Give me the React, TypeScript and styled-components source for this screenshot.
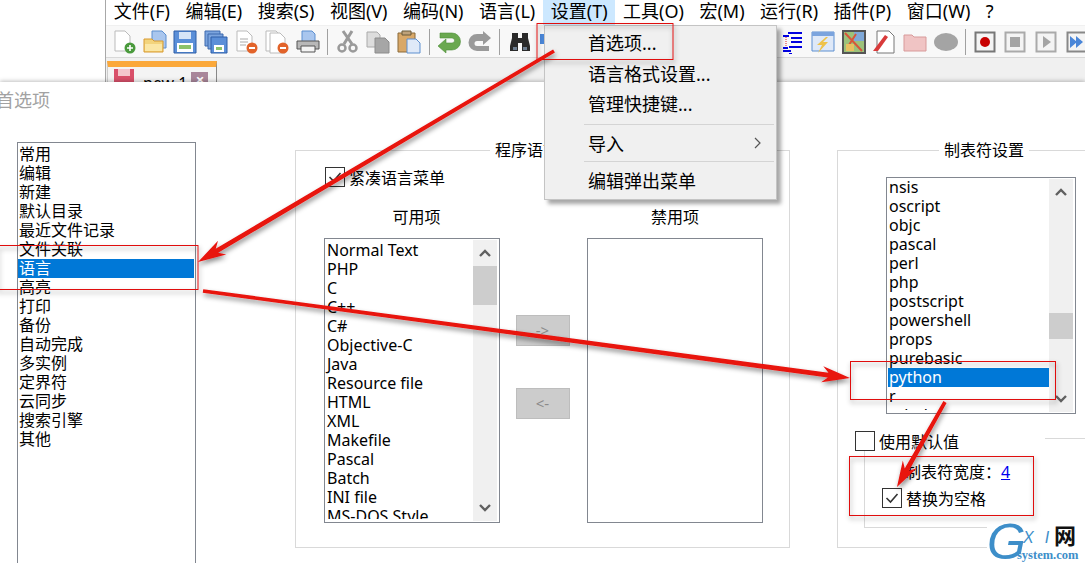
import React from 'react';
import styled, { createGlobalStyle } from 'styled-components';

const MENUS = ['文件(F)', '编辑(E)', '搜索(S)', '视图(V)', '编码(N)', '语言(L)', '设置(T)', '工具(O)', '宏(M)', '运行(R)', '插件(P)', '窗口(W)', '?'];
const CATEGORIES = ['常用', '编辑', '新建', '默认目录', '最近文件记录', '文件关联', '语言', '高亮', '打印', '备份', '自动完成', '多实例', '定界符', '云同步', '搜索引擎', '其他'];
const AVAILABLE = ['Normal Text', 'PHP', 'C', 'C++', 'C#', 'Objective-C', 'Java', 'Resource file', 'HTML', 'XML', 'Makefile', 'Pascal', 'Batch', 'INI file', 'MS-DOS Style'];
const TAB_LANGS = ['nsis', 'oscript', 'objc', 'pascal', 'perl', 'php', 'postscript', 'powershell', 'props', 'purebasic', 'python', 'r', 'rebol'];

const FONT = '"Noto Sans", "Noto Sans CJK SC", sans-serif';

const GlobalStyle = createGlobalStyle`
  html, body {
    margin: 0;
    padding: 0;
    background: #fff;
    overflow: hidden;
  }
`;

const Page = styled.div`
  position: relative;
  width: 1085px;
  height: 563px;
  overflow: hidden;
  background: #fff;
  color: #000;
  font-family: ${FONT};
  font-size: 16px;
`;

const Editor = styled.div`
  margin-left: 105px;
  height: 82px;
  border-left: 1px solid #a8a8a8;
  overflow: hidden;
`;

const MenuBar = styled.div`
  display: flex;
  height: 25px;
  background: #fff;
`;

const MenuItem = styled.div<{ $active?: boolean }>`
  padding: 0 7.75px;
  height: 25px;
  line-height: 22px;
  font-size: 18px;
  white-space: nowrap;
  background: ${(p) => (p.$active ? '#cce8ff' : 'transparent')};
`;

const Toolbar = styled.div`
  display: flex;
  align-items: center;
  height: 33px;
  padding-left: 6px;
  gap: 6.6px;
  background: #f8f8f8;
  border-top: 1px solid #f0f0f0;
  border-bottom: 1px solid #d8d8d8;
  box-sizing: border-box;
`;

const ToolIcon = styled.svg`
  flex: none;
  width: 24px;
  height: 24px;
`;

const ToolSep = styled.div`
  flex: none;
  width: 1px;
  height: 26px;
  background: #a0a0a0;
  margin: 0 1px;
`;

const ToolGap = styled.div`
  flex: none;
  width: 205px;
`;

const TabBar = styled.div`
  height: 24px;
  padding: 3px 0 0 1px;
  box-sizing: border-box;
  background: #f0f0f0;
`;

const Tab = styled.div`
  display: flex;
  align-items: flex-start;
  gap: 9px;
  width: 110px;
  height: 30px;
  padding: 2px 0 0 6px;
  box-sizing: border-box;
  border-top: 6px solid #fba83a;
  border-right: 1px solid #888;
  border-left: 1px solid #ccc;
  background: #f4f4f4;
  font-size: 16px;
  line-height: 18px;
`;

const TabIcon = styled.svg`
  flex: none;
  width: 20px;
  height: 20px;
`;

const TabName = styled.span`
  margin-top: 5px;
`;

const TabClose = styled.div`
  width: 17px;
  height: 17px;
  margin: 3px 0 0 -5px;
  background: #a9869a;
  color: #fff;
  font-size: 15px;
  line-height: 15px;
  text-align: center;
  font-weight: 700;
`;

const Dialog = styled.div`
  position: relative;
  height: 481px;
  background: #fff;
  box-shadow: 0 -1px 4px rgba(0, 0, 0, 0.25);
`;

const DialogTitle = styled.div`
  height: 36px;
  margin-left: -4px;
  font-size: 18px;
  line-height: 36px;
  color: #a2a2a2;
`;

const DialogBody = styled.div`
  display: flex;
  align-items: flex-start;
  padding-left: 17px;
`;

const CategoryList = styled.div`
  flex: none;
  width: 179px;
  height: 440px;
  margin-top: 24px;
  padding: 2px 1px 0 0;
  box-sizing: border-box;
  border: 1px solid #828790;
`;

const Row = styled.div<{ $selected?: boolean }>`
  height: 19px;
  padding-left: 1px;
  line-height: 18px;
  font-size: 16px;
  white-space: nowrap;
  color: ${(p) => (p.$selected ? '#fff' : '#000')};
  background: ${(p) => (p.$selected ? '#0078d7' : 'transparent')};
`;

const Group = styled.fieldset<{ $width: number; $height: number; $left: number; $legendLeft: number }>`
  flex: none;
  box-sizing: border-box;
  width: ${(p) => p.$width}px;
  height: ${(p) => p.$height}px;
  margin: 21px 0 0 ${(p) => p.$left}px;
  padding: 0;
  border: 1px solid #d9d9d9;
  min-inline-size: 0;

  legend {
    margin-left: ${(p) => p.$legendLeft}px;
    padding: 0 5px;
    height: 22px;
    line-height: 22px;
    font-size: 16px;
  }
`;

const LanguageBody = styled.div`
  padding: 6px 0 0 28px;
`;

const CheckRow = styled.label<{ $indent?: number }>`
  display: flex;
  align-items: center;
  gap: 4px;
  height: 20px;
  margin-left: ${(p) => p.$indent ?? 0}px;
  font-size: 16px;
  white-space: nowrap;
`;

const CheckBox = styled.span`
  display: block;
  flex: none;
  width: 18px;
  height: 18px;
  border: 1px solid #333;
  background: #fff;
`;

const Columns = styled.div`
  display: grid;
  grid-template-columns: 176px 87px 176px;
  margin-top: 18px;
`;

const ColumnTitle = styled.div<{ $shift?: number }>`
  height: 33px;
  padding-left: ${(p) => p.$shift ?? 0}px;
  line-height: 24px;
  text-align: center;
  font-size: 16px;
`;

const ListBox = styled.div<{ $height: number; $width?: number }>`
  position: relative;
  display: flex;
  width: ${(p) => (p.$width ? `${p.$width}px` : 'auto')};
  height: ${(p) => p.$height}px;
  box-sizing: border-box;
  border: 1px solid #828790;
  overflow: hidden;
`;

const ListRows = styled.div<{ $top: number }>`
  flex: 1;
  min-width: 0;
  margin-bottom: 3px;
  overflow: hidden;
  padding: ${(p) => p.$top}px 0 0 1px;
`;

const ScrollBar = styled.div`
  flex: none;
  display: flex;
  flex-direction: column;
  width: 24px;
  margin: 1px 2px 1px 0;
  background: #f0f0f0;
`;

const ScrollArrow = styled.svg`
  flex: none;
  width: 24px;
  height: 26px;
`;

const ScrollTrack = styled.div<{ $thumbTop: number }>`
  flex: 1;
  padding-top: ${(p) => p.$thumbTop}px;
`;

const ScrollThumb = styled.div<{ $height: number }>`
  height: ${(p) => p.$height}px;
  background: #cdcdcd;
`;

const MoveButtons = styled.div`
  display: flex;
  flex-direction: column;
  align-items: center;
  gap: 42px;
  padding: 110px 2px 0 0;
`;

const MoveButton = styled.div`
  width: 54px;
  height: 31px;
  box-sizing: border-box;
  background: #cccccc;
  border: 1px solid #bdbdbd;
  color: #8a8a8a;
  font-size: 15px;
  line-height: 28px;
  text-align: center;
`;

const TabBody = styled.div`
  padding: 16px 0 0 48px;
`;

const TabFooter = styled.div`
  display: flex;
  margin-top: 17px;
  margin-left: -31px;
  height: 20px;
`;

const FooterRule = styled.div`
  flex: none;
  width: 40px;
  height: 1px;
  margin: 7px 0 0 86px;
  background: #d9d9d9;
`;

const InnerGroup = styled.div`
  width: 400px;
  height: 77px;
  box-sizing: border-box;
  margin-left: -22px;
  padding: 11px 0 0 17px;
  border-left: 1px solid #d9d9d9;
  border-bottom: 1px solid #d9d9d9;
`;

const WidthRow = styled.div`
  height: 26px;
  padding-left: 23px;
  line-height: 20px;
  font-size: 16px;
`;

const WidthLink = styled.span`
  color: #0000ee;
  text-decoration: underline;
`;

const PopupMenu = styled.div`
  position: absolute;
  left: 544px;
  top: 25px;
  width: 233px;
  height: 175px;
  box-sizing: border-box;
  background: #f0f0f0;
  border: 1px solid #c4c4c4;
  box-shadow: 4px 4px 4px rgba(0, 0, 0, 0.35);
  font-size: 18px;
`;

const PopupItem = styled.div<{ $height: number }>`
  display: flex;
  justify-content: space-between;
  align-items: center;
  height: ${(p) => p.$height}px;
  padding: 0 13px 0 43px;
  white-space: nowrap;
`;

const PopupSep = styled.div<{ $gap?: number }>`
  height: 1px;
  margin: ${(p) => p.$gap ?? 0}px 2px 0 39px;
  background: #d4d4d4;
`;

const Annotations = styled.svg`
  position: absolute;
  left: 0;
  top: 0;
  width: 1085px;
  height: 563px;
  pointer-events: none;
`;

const Watermark = styled.div`
  position: absolute;
  left: 987px;
  top: 515px;
  width: 98px;
  height: 48px;
  background: #fff;
  color: #3d8ec9;
`;

const MarkG = styled.span`
  position: absolute;
  left: 0;
  top: 2px;
  font-family: 'Liberation Sans', sans-serif;
  font-style: italic;
  font-size: 50px;
  line-height: 50px;
`;

const MarkXI = styled.span`
  position: absolute;
  left: 36px;
  top: 14px;
  font-family: 'Liberation Sans', sans-serif;
  font-style: italic;
  font-size: 16px;
  line-height: 18px;
  letter-spacing: 11px;
`;

const MarkNet = styled.span`
  position: absolute;
  left: 67px;
  top: 8px;
  color: #111;
  font-size: 22px;
  line-height: 24px;
  font-weight: 700;
`;

const MarkDomain = styled.div`
  position: absolute;
  left: 30px;
  top: 33px;
  font-family: 'Liberation Serif', serif;
  font-weight: 700;
  font-size: 12.5px;
  line-height: 14px;
`;

function Sheet({ x = 3, y = 1, fill = '#fff', stroke = '#bbb' }: { x?: number; y?: number; fill?: string; stroke?: string }) {
  return <path d={`M${x} ${y}h10l5 5v15h-15z`} fill={fill} stroke={stroke} />;
}

const ICONS: Record<string, React.ReactNode> = {
  new: (
    <>
      <Sheet />
      <circle cx="18" cy="18" r="5.5" fill="#4a9a3c" />
      <path d="M15 18h6M18 15v6" stroke="#fff" strokeWidth="1.6" />
    </>
  ),
  open: (
    <>
      <path d="M9 1h10l4 4v13h-14z" fill="#a9c6ee" stroke="#5c8fd0" />
      <path d="M1 9h8l2 2h9v11h-19z" fill="#f3d47c" stroke="#d89a30" />
      <path d="M2 14h17v7h-17z" fill="#fbe7a5" />
    </>
  ),
  save: (
    <>
      <path d="M1 1h22v22h-22z" fill="#5b8fd8" stroke="#2f5fa8" />
      <path d="M6 2h12v7h-12z" fill="#d6e4f7" />
      <path d="M4 13h16v9h-16z" fill="#fff" />
      <path d="M6 15h12v4h-12z" fill="#8cc26a" />
    </>
  ),
  saveAll: (
    <>
      <path d="M1 1h15v15h-15z" fill="#7ba4de" stroke="#3d69ad" />
      <path d="M4 4h15v15h-15z" fill="#7ba4de" stroke="#3d69ad" />
      <path d="M7 7h16v16h-16z" fill="#5b8fd8" stroke="#2f5fa8" />
      <path d="M10 15h10v7h-10z" fill="#fff" />
      <path d="M12 17h6v3h-6z" fill="#8cc26a" />
    </>
  ),
  close: (
    <>
      <Sheet />
      <path d="M6 9h8M6 12h8M6 15h6" stroke="#aaa" />
      <circle cx="18" cy="18" r="5.5" fill="#e2632a" />
      <path d="M15 18h6" stroke="#fff" strokeWidth="2" />
    </>
  ),
  closeAll: (
    <>
      <Sheet x={1} y={1} />
      <Sheet x={5} y={3} />
      <circle cx="18" cy="18" r="5.5" fill="#e2632a" />
      <path d="M15 18h6" stroke="#fff" strokeWidth="2" />
    </>
  ),
  print: (
    <>
      <path d="M6 1h10l3 3v8h-13z" fill="#a9c6ee" stroke="#5c8fd0" />
      <path d="M1 11h22v8h-22z" fill="#b8b8b8" stroke="#555" />
      <path d="M5 16h14v6h-14z" fill="#f4f4f4" stroke="#555" />
    </>
  ),
  cut: (
    <>
      <path d="M16 1l-8 13M7 1l9 13" stroke="#9a9a9a" strokeWidth="3" />
      <circle cx="6" cy="18" r="3.5" fill="none" stroke="#9a9a9a" strokeWidth="2.5" />
      <circle cx="17" cy="18" r="3.5" fill="none" stroke="#9a9a9a" strokeWidth="2.5" />
    </>
  ),
  copy: (
    <>
      <path d="M1 2h10l3 3v12h-13z" fill="#ddd" stroke="#aaa" />
      <path d="M9 8h10l4 4v11h-14z" fill="#a6a6a6" stroke="#8c8c8c" />
    </>
  ),
  paste: (
    <>
      <path d="M1 3h17v19h-17z" fill="#d9a868" stroke="#8a6a3a" />
      <path d="M5 1h9v4h-9z" fill="#bfa27a" stroke="#6b5a3a" />
      <path d="M10 9h9l4 4v10h-13z" fill="#dfe9f8" stroke="#5c8fd0" />
    </>
  ),
  undo: <path d="M3 3h12a8.5 8.5 0 0 1 0 17h-6v3l-8-7 8-7v4h6a2.5 2.5 0 0 0 0-5h-12z" fill="#6aa84f" stroke="#4f8f3a" strokeWidth="0.6" />,
  redo: <path d="M21 21h-12a8.5 8.5 0 0 1 0-17h6v-3l8 7-8 7v-4h-6a2.5 2.5 0 0 0 0 5h12z" fill="#9a9a9a" />,
  find: (
    <>
      <path d="M4 3h6v5h4v-5h6v5l2 8v5h-8v-8h-4v8h-8v-5l2-8z" fill="#2a2a2a" />
      <path d="M5 17h4v3h-4zM15 17h4v3h-4z" fill="#6e7e90" />
    </>
  ),
  replace: <path d="M1 4h8v10h-8z" fill="#4a86d8" />,
  indent: (
    <>
      <path d="M7 2h14v2h-14zM2 5h6v2h-6zM10 7h11v2h-11zM10 11h11v2h-11zM2 17h5v2h-5zM8 16h13v2h-13zM2 20h8v2h-8zM8 23h3v1h-3z" fill="#0000e0" />
      <path d="M5 7v9" stroke="#e02020" strokeDasharray="1 1" />
    </>
  ),
  run: (
    <>
      <path d="M1 2h22v19h-22z" fill="#dfe9f8" stroke="#5c8fd0" />
      <path d="M1 2h22v4h-22z" fill="#7ba4de" />
      <path d="M15 7l-9 8h5l-4 8 10-11h-5l5-5z" fill="#eec24a" />
    </>
  ),
  map: (
    <>
      <path d="M0 0h24v24h-24z" fill="#555" />
      <path d="M2 2h20v20h-20z" fill="#9cc27a" />
      <path d="M12 2h10v9h-10z" fill="#7fa8d8" />
      <path d="M3 3l17 18M14 4l-9 14" stroke="#d8553a" strokeWidth="2" />
      <path d="M4 14h8v7h-8z" fill="#e8c060" />
    </>
  ),
  doc: (
    <>
      <path d="M5 1h12l5 5v17h-17z" fill="#fff" stroke="#777" />
      <path d="M1 21l12-16 3 2-10 14z" fill="#d83a3a" />
    </>
  ),
  folder: <path d="M1 5h8l2 2h12v14h-22z" fill="#f0c4c4" stroke="#d89a9a" />,
  blob: <ellipse cx="12" cy="12" rx="12" ry="9" fill="#a4a4a4" />,
  rec: (
    <>
      <path d="M1.5 2.5h19v19h-19z" fill="#f4f4f4" stroke="#777" strokeWidth="2" />
      <circle cx="11" cy="12" r="5" fill="#c80000" />
    </>
  ),
  stop: (
    <>
      <path d="M1.5 2.5h19v19h-19z" fill="#f4f4f4" stroke="#aaa" strokeWidth="2" />
      <path d="M6 7h10v10h-10z" fill="#a4a4a4" />
    </>
  ),
  play: (
    <>
      <path d="M1.5 2.5h19v19h-19z" fill="#f4f4f4" stroke="#aaa" strokeWidth="2" />
      <path d="M8 6l8 6-8 6z" fill="#a4a4a4" />
    </>
  ),
  ff: (
    <>
      <path d="M1.5 2.5h19v19h-19z" fill="#f4f4f4" stroke="#888" strokeWidth="2" />
      <path d="M4 6l7 6-7 6zM10 6l7 6-7 6z" fill="#4a86d8" />
    </>
  ),
};

function Tool({ name }: { name: string }) {
  return <ToolIcon viewBox="0 0 24 24">{ICONS[name]}</ToolIcon>;
}

function Scroll({ thumbTop, thumbHeight }: { thumbTop: number; thumbHeight: number }) {
  return (
    <ScrollBar>
      <ScrollArrow viewBox="0 0 24 26">
        <path d="M7 16l5-5 5 5" fill="none" stroke="#606060" strokeWidth="2.4" />
      </ScrollArrow>
      <ScrollTrack $thumbTop={thumbTop}>
        <ScrollThumb $height={thumbHeight} />
      </ScrollTrack>
      <ScrollArrow viewBox="0 0 24 26">
        <path d="M7 10l5 5 5-5" fill="none" stroke="#606060" strokeWidth="2.4" />
      </ScrollArrow>
    </ScrollBar>
  );
}

function Tick() {
  return (
    <svg width="18" height="18" viewBox="0 0 18 18">
      <path d="M3.5 9l4 4 7-8" fill="none" stroke="#333" strokeWidth="1.6" />
    </svg>
  );
}

function Arrow({ from, tip, size = 26 }: { from: [number, number]; tip: [number, number]; size?: number }) {
  // tapered shaft with a swallow-tail head
  const dx = tip[0] - from[0];
  const dy = tip[1] - from[1];
  const len = Math.hypot(dx, dy);
  const ux = dx / len;
  const uy = dy / len;
  const nx = -uy;
  const ny = ux;
  const at = (along: number, side: number) =>
    `${tip[0] - ux * along + nx * side},${tip[1] - uy * along + ny * side}`;
  const points = [
    at(0, 0),
    at(size, 8),
    at(size - 6, 2.4),
    at(len, 1.8),
    at(len, -1.8),
    at(size - 6, -2.4),
    at(size, -8),
  ].join(' ');
  return <polygon points={points} fill="#e8120f" />;
}

export default function App() {
  return (
    <Page>
      <GlobalStyle />
      <Editor>
        <MenuBar>
          {MENUS.map((m) => (
            <MenuItem key={m} $active={m === '设置(T)'}>
              {m}
            </MenuItem>
          ))}
        </MenuBar>
        <Toolbar>
          <Tool name="new" />
          <Tool name="open" />
          <Tool name="save" />
          <Tool name="saveAll" />
          <Tool name="close" />
          <Tool name="closeAll" />
          <Tool name="print" />
          <ToolSep />
          <Tool name="cut" />
          <Tool name="copy" />
          <Tool name="paste" />
          <ToolSep />
          <Tool name="undo" />
          <Tool name="redo" />
          <ToolSep />
          <Tool name="find" />
          <Tool name="replace" />
          <ToolGap />
          <Tool name="indent" />
          <Tool name="run" />
          <Tool name="map" />
          <Tool name="doc" />
          <Tool name="folder" />
          <Tool name="blob" />
          <ToolSep />
          <Tool name="rec" />
          <Tool name="stop" />
          <Tool name="play" />
          <Tool name="ff" />
        </Toolbar>
        <TabBar>
          <Tab>
            <TabIcon viewBox="0 0 20 20">
              <path d="M0 0h20v20h-20z" fill="#d9506a" />
              <path d="M4 0h12v7h-12z" fill="#f4c6cc" />
            </TabIcon>
            <TabName>new 1</TabName>
            <TabClose>×</TabClose>
          </Tab>
        </TabBar>
      </Editor>

      <Dialog>
        <DialogTitle>首选项</DialogTitle>
        <DialogBody>
          <CategoryList>
            {CATEGORIES.map((c) => (
              <Row key={c} $selected={c === '语言'}>
                {c}
              </Row>
            ))}
          </CategoryList>

          <Group $width={495} $height={409} $left={99} $legendLeft={194}>
            <legend>程序语言</legend>
            <LanguageBody>
              <CheckRow $indent={1}>
                <CheckBox>
                  <Tick />
                </CheckBox>
                紧凑语言菜单
              </CheckRow>
              <Columns>
                <div>
                  <ColumnTitle $shift={9}>可用项</ColumnTitle>
                  <ListBox $height={285}>
                    <ListRows $top={2}>
                      {AVAILABLE.map((l) => (
                        <Row key={l}>{l}</Row>
                      ))}
                    </ListRows>
                    <Scroll thumbTop={0} thumbHeight={39} />
                  </ListBox>
                </div>
                <MoveButtons>
                  <MoveButton>-&gt;</MoveButton>
                  <MoveButton>&lt;-</MoveButton>
                </MoveButtons>
                <div>
                  <ColumnTitle>禁用项</ColumnTitle>
                  <ListBox $height={285} />
                </div>
              </Columns>
            </LanguageBody>
          </Group>

          <Group $width={300} $height={409} $left={47} $legendLeft={101}>
            <legend>制表符设置</legend>
            <TabBody>
              <ListBox $height={237} $width={190}>
                <ListRows $top={0}>
                  {TAB_LANGS.map((l) => (
                    <Row key={l} $selected={l === 'python'}>
                      {l}
                    </Row>
                  ))}
                </ListRows>
                <Scroll thumbTop={108} thumbHeight={26} />
              </ListBox>
              <TabFooter>
                <CheckRow>
                  <CheckBox />
                  使用默认值
                </CheckRow>
                <FooterRule />
              </TabFooter>
              <InnerGroup>
                <WidthRow>
                  制表符宽度：<WidthLink>4</WidthLink>
                </WidthRow>
                <CheckRow>
                  <CheckBox>
                    <Tick />
                  </CheckBox>
                  替换为空格
                </CheckRow>
              </InnerGroup>
            </TabBody>
          </Group>
        </DialogBody>
      </Dialog>

      <PopupMenu>
        <PopupItem $height={32}>首选项...</PopupItem>
        <PopupItem $height={30}>语言格式设置...</PopupItem>
        <PopupItem $height={30}>管理快捷键...</PopupItem>
        <PopupSep $gap={6} />
        <PopupItem $height={36}>
          导入
          <svg width="10" height="14" viewBox="0 0 10 14">
            <path d="M2 2l5 5-5 5" fill="none" stroke="#555" strokeWidth="1.2" />
          </svg>
        </PopupItem>
        <PopupSep />
        <PopupItem $height={35}>编辑弹出菜单</PopupItem>
      </PopupMenu>

      <Watermark>
        <MarkG>G</MarkG>
        <MarkXI>XI</MarkXI>
        <MarkNet>网</MarkNet>
        <MarkDomain>system.com</MarkDomain>
      </Watermark>

      <Annotations viewBox="0 0 1085 563">
        <defs>
          <filter id="annotationShadow" x="-10%" y="-10%" width="120%" height="120%">
            <feDropShadow dx="1" dy="3" stdDeviation="2.5" floodColor="#000" floodOpacity="0.45" />
          </filter>
        </defs>
        <g filter="url(#annotationShadow)">
          <rect x="537" y="23.5" width="136" height="36" fill="none" stroke="#e01010" />
          <rect x="-2" y="245.5" width="200" height="44" fill="none" stroke="#e01010" />
          <rect x="850.5" y="361.5" width="205" height="38" fill="none" stroke="#e01010" />
          <rect x="849.5" y="456.5" width="184" height="59" fill="none" stroke="#e01010" />
          <Arrow from={[554, 51]} tip={[198, 262]} size={28} />
          <Arrow from={[203, 291]} tip={[850, 378]} size={28} />
          <Arrow from={[945, 402]} tip={[897, 487]} size={26} />
        </g>
      </Annotations>
    </Page>
  );
}
